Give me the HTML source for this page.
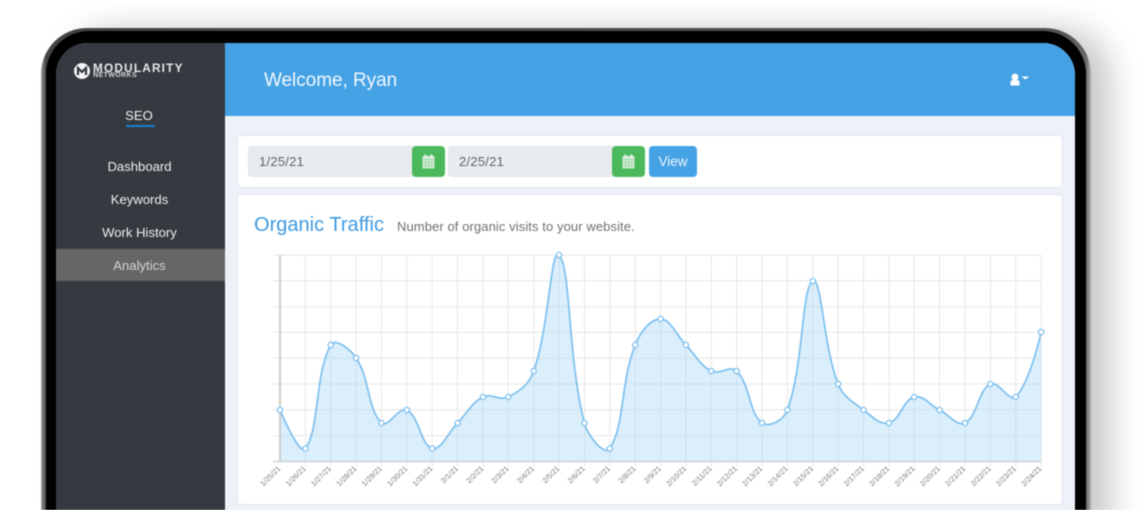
<!DOCTYPE html>
<html><head><meta charset="utf-8"><title>Analytics</title>
<style>
html,body{margin:0;padding:0;background:#fff}
#v{position:relative;width:1145px;height:510px;overflow:hidden;background:#fff;font-family:"Liberation Sans",sans-serif;filter:blur(.45px)}
.a{position:absolute;white-space:nowrap}
#shadow{left:50px;top:32px;width:1040px;height:600px;border-radius:46px;box-shadow:20px -3px 32px rgba(0,0,0,.22)}
#frame{left:41px;top:28px;width:1050px;height:600px;border-radius:46px;background:linear-gradient(90deg,#9a9a9a 0,#777 2px,#444 5px,#444 30px,#555 1020px,#666 1045px,#b0b0b0 1050px)}
#black{left:46px;top:31px;width:1040px;height:600px;border-radius:43px;background:#000}
#screen{left:56px;top:43px;width:1019px;height:580px;border-radius:32px 32px 0 0;overflow:hidden;background:#edf2f9}
#side{left:0;top:0;width:169px;height:580px;background:#343a40}
#head{left:169px;top:0;width:850px;height:73px;background:#45a2e5}
.m{left:0;width:167px;text-align:center;color:#f0f0f0;font-size:13.100px;line-height:20px}
.card{background:#fff;border-radius:3px;box-shadow:0 0 2px rgba(0,0,0,.12)}
.inp{background:#e9ecef;border-radius:4px 0 0 4px;box-shadow:inset 0 0 0 1px #e2e5e8;color:#5f6469;font-size:13px;line-height:31px;padding-left:11px;box-sizing:border-box;height:31px;letter-spacing:.25px}
.gb{background:#4cb85c;border-radius:4px;width:33px;height:31px}
.gb svg{position:absolute;left:10px;top:8px}
</style></head>
<body><div id="v">
<div class="a" id="shadow"></div>
<div class="a" id="frame"></div>
<div class="a" id="black"></div>
<div class="a" id="screen">
  <div class="a" id="side">
    <svg class="a" style="left:17px;top:19px" width="18" height="18" viewBox="0 0 18 18"><circle cx="9" cy="9" r="8" fill="#f4f4f4"/><path d="M5 13V6l4 4 4-4v7" fill="none" stroke="#343a40" stroke-width="2.2"/></svg>
    <div class="a" style="left:37px;top:19px;color:#e8e8e8;font-size:11.8px;font-weight:bold;line-height:13px;letter-spacing:1.2px">MODULARITY</div>
    <div class="a" style="left:37px;top:29px;color:#d8d8d8;font-size:7px;font-weight:bold;line-height:8px;letter-spacing:.4px">NETWORKS</div>
    <div class="a m" style="top:62.500px;width:166px">SEO</div>
    <div class="a" style="left:70px;top:82px;width:29px;height:2px;background:#1a7fd6"></div>
    <div class="a m" style="top:114px">Dashboard</div>
    <div class="a m" style="top:147px">Keywords</div>
    <div class="a m" style="top:180px">Work History</div>
    <div class="a" style="left:0;top:205.500px;width:169px;height:32.500px;background:#666"></div>
    <div class="a m" style="top:212.500px;color:#d4d4d4">Analytics</div>
  </div>
  <div class="a" id="head">
    <div class="a" style="left:39px;top:25px;color:#f2f8fd;font-size:19px;line-height:26px;letter-spacing:-.05px">Welcome, Ryan</div>
    <svg class="a" style="left:784px;top:29px" width="23" height="16" viewBox="0 0 23 16"><circle cx="6" cy="5" r="3.400" fill="#fff"/><path d="M1.500 13.500V10.500Q1.500 8 4 8H8Q10.500 8 10.500 10.500V13.500Z" fill="#fff"/><path d="M12.500 4.500H20L16.200 7.500Z" fill="#fff"/></svg>
  </div>
</div>

<div class="a card" style="left:238px;top:136px;width:824px;height:51px"></div>
<div class="a inp" style="left:248px;top:146px;width:165px">1/25/21</div>
<div class="a gb" style="left:412px;top:146px"><svg width="13" height="15" viewBox="0 0 13 15"><rect x="0.500" y="2" width="12" height="12.500" rx="1" fill="#d8eedb"/><rect x="2.500" y="0.500" width="2" height="3" fill="#e4f3e6"/><rect x="8.500" y="0.500" width="2" height="3" fill="#e4f3e6"/><path d="M0.500 5.500H12.500M0.500 8.500H12.500M0.500 11.500H12.500M3.500 5V14.500M6.500 5V14.500M9.500 5V14.500" stroke="#8fd09a" stroke-width=".7"/></svg></div>
<div class="a inp" style="left:448px;top:146px;width:165px">2/25/21</div>
<div class="a gb" style="left:612px;top:146px"><svg width="13" height="15" viewBox="0 0 13 15"><rect x="0.500" y="2" width="12" height="12.500" rx="1" fill="#d8eedb"/><rect x="2.500" y="0.500" width="2" height="3" fill="#e4f3e6"/><rect x="8.500" y="0.500" width="2" height="3" fill="#e4f3e6"/><path d="M0.500 5.500H12.500M0.500 8.500H12.500M0.500 11.500H12.500M3.500 5V14.500M6.500 5V14.500M9.500 5V14.500" stroke="#8fd09a" stroke-width=".7"/></svg></div>
<div class="a" style="left:649px;top:146px;width:48px;height:31px;background:#45a2e5;border-radius:4px;color:#eef7fd;font-size:13.500px;line-height:31px;text-align:center">View</div>

<div class="a card" style="left:238px;top:195px;width:824px;height:309px"></div>
<div class="a" style="left:254px;top:212px;color:#3f9ae0;font-size:20px;line-height:26px;letter-spacing:.02px">Organic Traffic</div>
<div class="a" style="left:397px;top:218px;color:#6c7074;font-size:13px;line-height:18px;letter-spacing:.09px">Number of organic visits to your website.</div>

<svg class="a" style="left:0;top:0" width="1145" height="510" viewBox="0 0 1145 510">
  <g stroke="#e8e8e8" stroke-width="1" fill="none">
    <path d="M273 255H1041M273 280.800H1041M273 306.600H1041M273 332.400H1041M273 358.200H1041M273 384H1041M273 409.800H1041M273 435.600H1041"/>
    <path d="M305.370 255V467M330.740 255V467M356.110 255V467M381.480 255V467M406.850 255V467M432.220 255V467M457.590 255V467M482.960 255V467M508.330 255V467M533.700 255V467M559.070 255V467M584.440 255V467M609.810 255V467M635.180 255V467M660.550 255V467M685.920 255V467M711.290 255V467M736.660 255V467M762.030 255V467M787.400 255V467M812.770 255V467M838.140 255V467M863.510 255V467M888.880 255V467M914.250 255V467M939.620 255V467M964.990 255V467M990.360 255V467M1015.730 255V467M1041.100 255V467"/>
  </g>
  <path d="M280 410C280 410 299.240 456.350 305.370 448.500C319.540 430.350 314.730 373.560 330.740 345C335.020 337.360 350.220 348.950 356.110 358C370.520 380.150 367.070 408.230 381.480 423C387.370 429.030 399.100 406.100 406.850 410C419.390 416.300 420.820 445.580 432.220 448.500C441.120 450.780 447.480 433.260 457.590 423C467.780 412.660 471.020 403.120 482.960 397C491.320 392.720 499.970 401.280 508.330 397C520.270 390.880 528.950 384.310 533.700 371C549.240 327.510 550.720 246.450 559.070 255C571.020 267.250 567.690 359.130 584.440 423C587.990 436.530 604.690 456.380 609.810 448.500C624.980 425.180 620.040 383.640 635.180 345C640.340 331.840 650.400 319 660.550 319C670.700 319 675.770 334.600 685.920 345C696.070 355.400 699.350 364.880 711.290 371C719.650 375.280 730.470 364.660 736.660 371C750.770 385.460 748.430 412.540 762.030 423C768.720 428.140 783.780 420.120 787.400 410C804.080 363.310 801.540 286.760 812.770 281C821.830 276.360 823.020 345.560 838.140 384C843.320 397.160 852.140 401.260 863.510 410C872.440 416.860 879.950 425.290 888.880 423C900.250 420.090 902.880 399.910 914.250 397C923.180 394.710 929.470 404.800 939.620 410C949.770 415.200 957.280 426.950 964.990 423C977.570 416.550 977.780 390.450 990.360 384C998.070 380.050 1009.840 403.030 1015.730 397C1030.140 382.230 1041.100 332 1041.100 332V461.500H280Z" fill="#8ecbf5" fill-opacity=".33"/>
  <path d="M280 255V461.500" stroke="#c8c8c8" stroke-width="1.800"/>
  <path d="M273 461.500H1041" stroke="#c4cacf" stroke-width="1.300"/>
  <path d="M280 410C280 410 299.240 456.350 305.370 448.500C319.540 430.350 314.730 373.560 330.740 345C335.020 337.360 350.220 348.950 356.110 358C370.520 380.150 367.070 408.230 381.480 423C387.370 429.030 399.100 406.100 406.850 410C419.390 416.300 420.820 445.580 432.220 448.500C441.120 450.780 447.480 433.260 457.590 423C467.780 412.660 471.020 403.120 482.960 397C491.320 392.720 499.970 401.280 508.330 397C520.270 390.880 528.950 384.310 533.700 371C549.240 327.510 550.720 246.450 559.070 255C571.020 267.250 567.690 359.130 584.440 423C587.990 436.530 604.690 456.380 609.810 448.500C624.980 425.180 620.040 383.640 635.180 345C640.340 331.840 650.400 319 660.550 319C670.700 319 675.770 334.600 685.920 345C696.070 355.400 699.350 364.880 711.290 371C719.650 375.280 730.470 364.660 736.660 371C750.770 385.460 748.430 412.540 762.030 423C768.720 428.140 783.780 420.120 787.400 410C804.080 363.310 801.540 286.760 812.770 281C821.830 276.360 823.020 345.560 838.140 384C843.320 397.160 852.140 401.260 863.510 410C872.440 416.860 879.950 425.290 888.880 423C900.250 420.090 902.880 399.910 914.250 397C923.180 394.710 929.470 404.800 939.620 410C949.770 415.200 957.280 426.950 964.990 423C977.570 416.550 977.780 390.450 990.360 384C998.070 380.050 1009.840 403.030 1015.730 397C1030.140 382.230 1041.100 332 1041.100 332" fill="none" stroke="#7dc0ee" stroke-width="1.700"/>
  <g fill="#fff" stroke="#7dc0ee" stroke-width="1.300">
    <circle cx="280" cy="410" r="2.600"/><circle cx="305.370" cy="448.500" r="2.600"/><circle cx="330.740" cy="345" r="2.600"/><circle cx="356.110" cy="358" r="2.600"/><circle cx="381.480" cy="423" r="2.600"/><circle cx="406.850" cy="410" r="2.600"/><circle cx="432.220" cy="448.500" r="2.600"/><circle cx="457.590" cy="423" r="2.600"/><circle cx="482.960" cy="397" r="2.600"/><circle cx="508.330" cy="397" r="2.600"/><circle cx="533.700" cy="371" r="2.600"/><circle cx="559.070" cy="255" r="2.600"/><circle cx="584.440" cy="423" r="2.600"/><circle cx="609.810" cy="448.500" r="2.600"/><circle cx="635.180" cy="345" r="2.600"/><circle cx="660.550" cy="319" r="2.600"/><circle cx="685.920" cy="345" r="2.600"/><circle cx="711.290" cy="371" r="2.600"/><circle cx="736.660" cy="371" r="2.600"/><circle cx="762.030" cy="423" r="2.600"/><circle cx="787.400" cy="410" r="2.600"/><circle cx="812.770" cy="281" r="2.600"/><circle cx="838.140" cy="384" r="2.600"/><circle cx="863.510" cy="410" r="2.600"/><circle cx="888.880" cy="423" r="2.600"/><circle cx="914.250" cy="397" r="2.600"/><circle cx="939.620" cy="410" r="2.600"/><circle cx="964.990" cy="423" r="2.600"/><circle cx="990.360" cy="384" r="2.600"/><circle cx="1015.730" cy="397" r="2.600"/><circle cx="1041.100" cy="332" r="2.600"/>
  </g>
  <g font-family="Liberation Sans, sans-serif" font-size="7.500" fill="#7c7c7c" text-anchor="end">
    <text transform="translate(281 469) rotate(-45)">1/25/21</text>
    <text transform="translate(306.400 469) rotate(-45)">1/26/21</text>
    <text transform="translate(331.700 469) rotate(-45)">1/27/21</text>
    <text transform="translate(357.100 469) rotate(-45)">1/28/21</text>
    <text transform="translate(382.500 469) rotate(-45)">1/29/21</text>
    <text transform="translate(407.900 469) rotate(-45)">1/30/21</text>
    <text transform="translate(433.200 469) rotate(-45)">1/31/21</text>
    <text transform="translate(458.600 469) rotate(-45)">2/1/21</text>
    <text transform="translate(484 469) rotate(-45)">2/2/21</text>
    <text transform="translate(509.300 469) rotate(-45)">2/3/21</text>
    <text transform="translate(534.700 469) rotate(-45)">2/4/21</text>
    <text transform="translate(560.100 469) rotate(-45)">2/5/21</text>
    <text transform="translate(585.400 469) rotate(-45)">2/6/21</text>
    <text transform="translate(610.800 469) rotate(-45)">2/7/21</text>
    <text transform="translate(636.200 469) rotate(-45)">2/8/21</text>
    <text transform="translate(661.600 469) rotate(-45)">2/9/21</text>
    <text transform="translate(686.900 469) rotate(-45)">2/10/21</text>
    <text transform="translate(712.300 469) rotate(-45)">2/11/21</text>
    <text transform="translate(737.700 469) rotate(-45)">2/12/21</text>
    <text transform="translate(763 469) rotate(-45)">2/13/21</text>
    <text transform="translate(788.400 469) rotate(-45)">2/14/21</text>
    <text transform="translate(813.800 469) rotate(-45)">2/15/21</text>
    <text transform="translate(839.100 469) rotate(-45)">2/16/21</text>
    <text transform="translate(864.500 469) rotate(-45)">2/17/21</text>
    <text transform="translate(889.900 469) rotate(-45)">2/18/21</text>
    <text transform="translate(915.300 469) rotate(-45)">2/19/21</text>
    <text transform="translate(940.600 469) rotate(-45)">2/20/21</text>
    <text transform="translate(966 469) rotate(-45)">2/21/21</text>
    <text transform="translate(991.400 469) rotate(-45)">2/22/21</text>
    <text transform="translate(1016.700 469) rotate(-45)">2/23/21</text>
    <text transform="translate(1042.100 469) rotate(-45)">2/24/21</text>
  </g>
</svg>
</div></body></html>
